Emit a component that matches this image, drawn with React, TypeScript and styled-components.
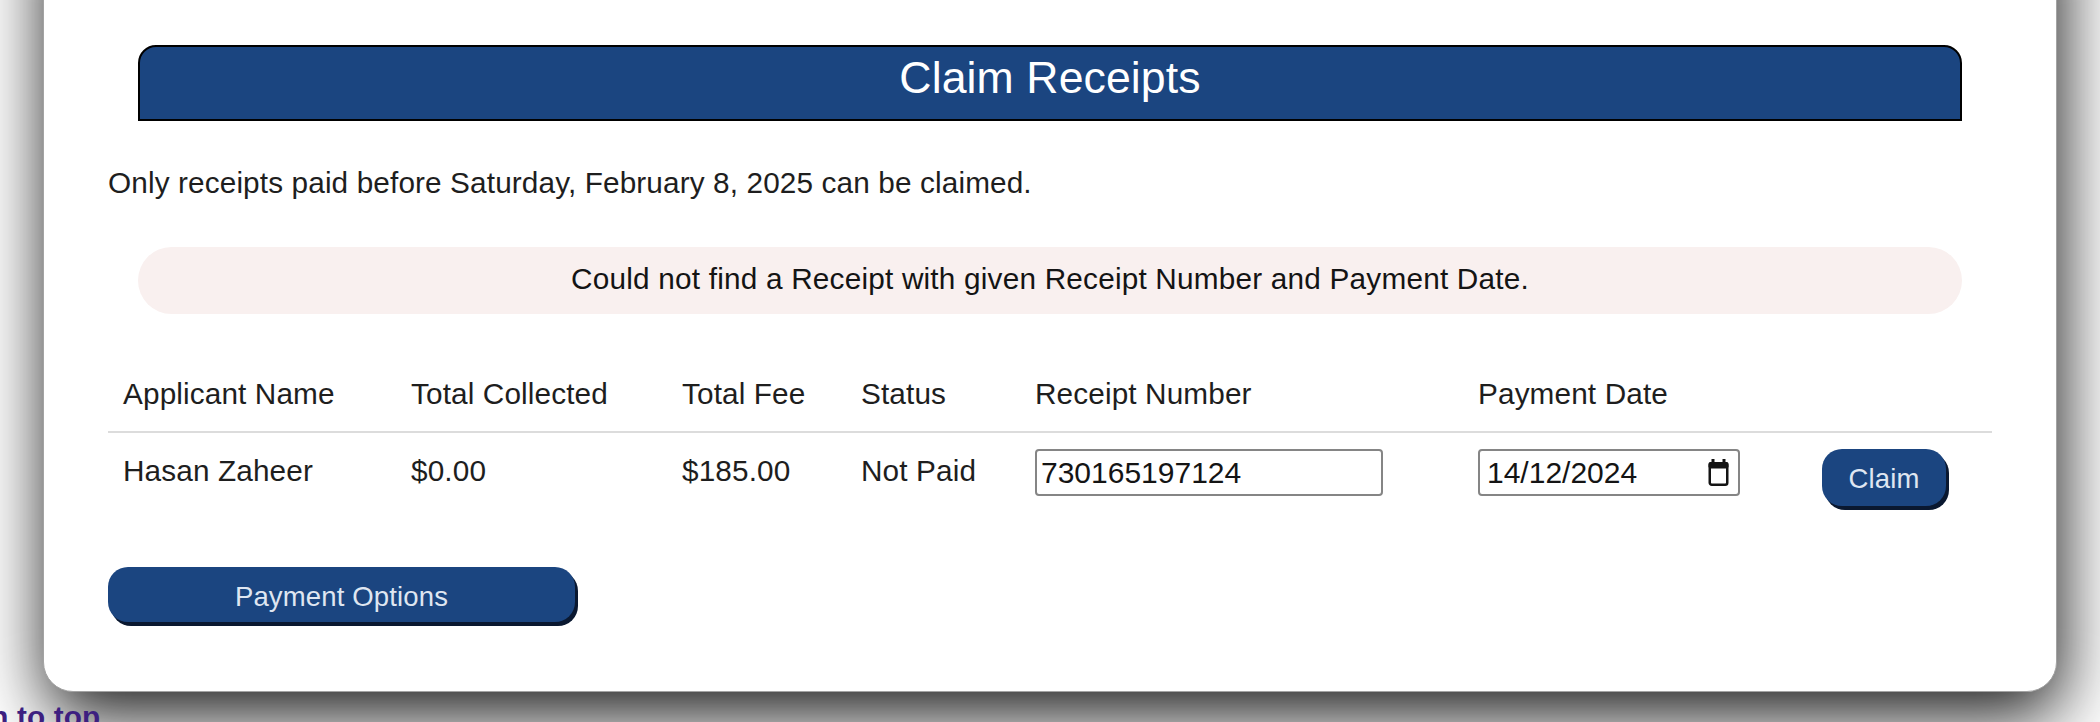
import styled, { createGlobalStyle } from 'styled-components';

const GlobalStyle = createGlobalStyle`
  html, body {
    margin: 0;
    padding: 0;
    background: #fff;
    overflow: hidden;
  }

  body {
    font-family: "Liberation Sans", Arial, Helvetica, sans-serif;
    font-size: 29.75px;
    letter-spacing: 0.12px;
    color: #1e1e1e;
  }
`

const columns = ['Applicant Name', 'Total Collected', 'Total Fee', 'Status', 'Receipt Number', 'Payment Date', '']

const receipts = [
  {
    name: 'Hasan Zaheer',
    collected: '$0.00',
    fee: '$185.00',
    status: 'Not Paid',
    receipt: '730165197124',
    date: '14/12/2024',
  },
]

const CalendarGlyph = () => (
  <svg width="21" height="27" viewBox="0 0 21 27" aria-hidden="true">
    <rect x="3.5" y="0" width="3" height="5" fill="#141414" />
    <rect x="14.5" y="0" width="3" height="5" fill="#141414" />
    <rect x="0.5" y="3" width="20" height="6.5" rx="2" fill="#141414" />
    <rect x="1.75" y="4.25" width="17.5" height="21.5" rx="2" fill="none" stroke="#141414" strokeWidth="2.5" />
  </svg>
)

const App = () => {
  return (
    <>
      <GlobalStyle />
      <Page>
        <Card>
          <Title>Claim Receipts</Title>
          <Intro>Only receipts paid before Saturday, February 8, 2025 can be claimed.</Intro>
          <Alert>Could not find a Receipt with given Receipt Number and Payment Date.</Alert>

          <Table>
            <HeadRow>
              {columns.map((col, i) => (
                <HeadCell key={i}>{col}</HeadCell>
              ))}
            </HeadRow>
            {receipts.map((r) => (
              <BodyRow key={r.receipt}>
                <BodyCell $text>{r.name}</BodyCell>
                <BodyCell $text>{r.collected}</BodyCell>
                <BodyCell $text>{r.fee}</BodyCell>
                <BodyCell $text>{r.status}</BodyCell>
                <BodyCell>
                  <ReceiptInput type="text" defaultValue={r.receipt} />
                </BodyCell>
                <BodyCell>
                  <DateField>
                    <DateInput type="text" defaultValue={r.date} />
                    <CalendarGlyph />
                  </DateField>
                </BodyCell>
                <BodyCell>
                  <ClaimButton>Claim</ClaimButton>
                </BodyCell>
              </BodyRow>
            ))}
          </Table>

          <OptionsButton>Payment Options</OptionsButton>
        </Card>
      </Page>
      <TopLink href="#top">Return to top</TopLink>
    </>
  )
}

const Page = styled.div`
  padding: 0 43px;
`

const Card = styled.div`
  margin-top: -100px;
  padding: 144px 64px 69px;

  background-color: #fff;
  border: 1px solid #a3a3a3;
  border-radius: 0 0 30px 30px;
  box-shadow: 4px 24px 70px rgba(0, 0, 0, 0.9);
`

const Title = styled.h2`
  box-sizing: border-box;
  height: 76px;
  margin: 0 30px;
  padding-top: 6px;

  font-size: 1.5em;
  font-weight: normal;
  letter-spacing: 0.1px;
  text-align: center;
  color: #fff;

  background-color: #1b4580;
  border: 2px solid #000;
  border-radius: 18px 18px 0 0;
`

const Intro = styled.p`
  margin: 45px 0 0;
`

const Alert = styled.div`
  margin: 47px 30px 0;
  padding: 15px 0 18px;

  text-align: center;
  letter-spacing: 0.2px;
  color: #141414;

  background-color: #f9f0ef;
  border-radius: 34px;
`

const Table = styled.div`
  margin-top: 48px;
`

const gridColumns = '288px 271px 179px 174px 443px 344px 185px'

const HeadRow = styled.div`
  display: grid;
  grid-template-columns: ${gridColumns};
  border-bottom: 2px solid #dcdcdc;
`

const HeadCell = styled.div`
  padding: 15px 15px 20px;
`

const BodyRow = styled.div`
  display: grid;
  grid-template-columns: ${gridColumns};
  align-items: start;
`

const BodyCell = styled.div<{ $text?: boolean }>`
  padding: ${(p) => (p.$text ? '21px 15px 16px' : '16px 15px')};
`

const ReceiptInput = styled.input`
  box-sizing: border-box;
  width: 348px;
  height: 47px;
  padding: 0 4px;

  font-family: inherit;
  font-size: 30px;
  color: #141414;

  border: 2px solid #858585;
  border-radius: 4px;
  outline: none;
`

const DateField = styled.div`
  box-sizing: border-box;
  display: flex;
  align-items: center;

  width: 262px;
  height: 47px;
  padding: 0 9px 0 7px;

  border: 2px solid #858585;
  border-radius: 4px;
`

const DateInput = styled.input`
  flex: 1;
  min-width: 0;
  padding: 0;

  font-family: inherit;
  font-size: 30px;
  color: #141414;

  border: none;
  outline: none;
  background: transparent;
`

const BlueButton = styled.button`
  box-sizing: border-box;
  padding: 0;

  font-family: inherit;
  font-size: 27.5px;
  letter-spacing: 0.15px;
  color: #dfe6f1;

  background-color: #1b4580;
  border: none;
  border-radius: 20px;
  box-shadow: 3px 4px 0 #0a1830;
  cursor: pointer;
`

const ClaimButton = styled(BlueButton)`
  width: 124px;
  height: 57px;
  padding-top: 3px;
`

const OptionsButton = styled(BlueButton)`
  display: block;
  width: 467px;
  height: 55px;
  margin-top: 45px;
  padding-top: 5px;
`

const TopLink = styled.a`
  display: block;
  margin: 8px 0 0 -88px;

  font-weight: bold;
  color: #3d1f80;
  text-decoration: none;
`

export default App
